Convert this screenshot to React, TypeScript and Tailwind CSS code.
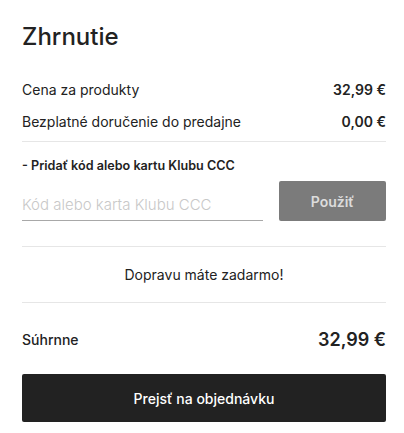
export default function App() {
  return (
    <div className="w-[404px] h-[433px] bg-white pl-[22px] pr-[18px] pt-[20px] text-[#222]" style={{ fontFamily: "Inter, 'Noto Sans', sans-serif" }}>
      <h1 className="text-[24px] leading-[33px] font-medium text-[#222]">Zhrnutie</h1>
      <div className="mt-[26px] flex flex-col gap-[10px]">
        <div className="flex justify-between items-center text-[14px] leading-[22px]">
          <span>Cena za produkty</span>
          <span className="font-semibold">32,99 €</span>
        </div>
        <div className="flex justify-between items-center text-[14px] leading-[22px]">
          <span>Bezplatné doručenie do predajne</span>
          <span className="font-semibold">0,00 €</span>
        </div>
      </div>
      <div className="mt-[8px] h-px bg-[#e6e6e6]" />
      <div className="mt-[15px] text-[12.6px] leading-[18px] font-semibold">- Pridať kód alebo kartu Klubu CCC</div>
      <div className="mt-[6px] flex items-center gap-[16px]">
        <div className="flex-1 h-[40px] flex items-end">
          <div className="w-full border-b border-[#a8a8a8] pb-[5px] text-[15px] leading-[20px] font-light text-[#c8c8c8]">Kód alebo karta Klubu CCC</div>
        </div>
        <button className="w-[107px] h-[40px] rounded-[2px] bg-[#7b7b7b] text-[#dcdcdc] text-[14px] font-semibold">Použiť</button>
      </div>
      <div className="mt-[25px] h-px bg-[#e6e6e6]" />
      <div className="h-[55px] flex items-center justify-center text-[14px]">Dopravu máte zadarmo!</div>
      <div className="h-px bg-[#e6e6e6]" />
      <div className="mt-[22px] flex justify-between items-center h-[28px]">
        <span className="text-[14px] font-medium">Súhrnne</span>
        <span className="text-[18px] font-semibold">32,99 €</span>
      </div>
      <button className="mt-[21px] w-full h-[48px] rounded-[2px] bg-[#222] text-white text-[14px] font-medium">Prejsť na objednávku</button>
    </div>
  );
}
